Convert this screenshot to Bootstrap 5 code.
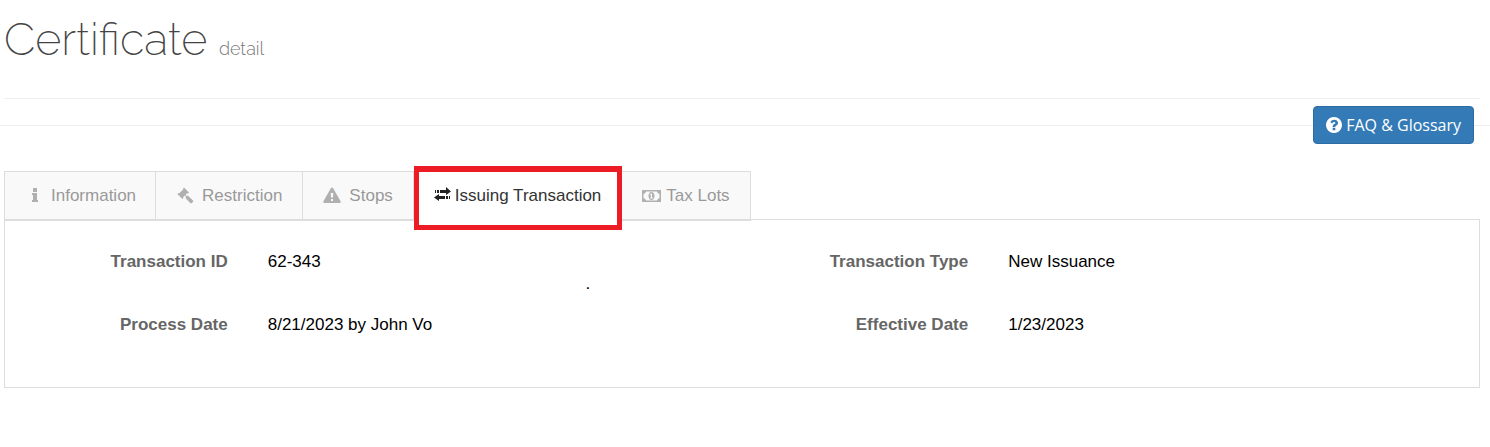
<!DOCTYPE html>
<html lang="en">
<head>
<meta charset="utf-8">
<meta name="viewport" content="width=device-width, initial-scale=1">
<title>Certificate detail</title>
<link href="https://cdn.jsdelivr.net/npm/bootstrap@5.3.0/dist/css/bootstrap.min.css" rel="stylesheet">
<style>
body{font-family:"Liberation Sans",Arial,sans-serif;font-size:17px;line-height:24px;color:#000;background:#fff}
svg{fill:currentColor}
.page-title{font-family:Raleway,Lato,sans-serif;font-weight:200;font-size:45px;line-height:56px;color:#444;padding:12px 0 30px;border-bottom:1px solid #eee;margin:0 10px 0 4px}
.page-title small{font-size:18px;font-weight:300;line-height:1;color:#777}
.help-bar{margin-top:7px;padding-right:16px;background:linear-gradient(#eee,#eee) 0 19px/100% 1px no-repeat}
.btn-help{--bs-btn-color:#fff;--bs-btn-bg:#337ab7;--bs-btn-border-color:#2e6da4;--bs-btn-hover-color:#fff;--bs-btn-hover-bg:#286090;--bs-btn-border-radius:4px;--bs-btn-padding-x:12px;--bs-btn-padding-y:6px;font-family:"Open Sans",sans-serif;font-size:16px;line-height:24px}
.tabs-area{margin:27px 10px 0 4px}
.cert-tabs{--bs-nav-tabs-border-width:0;position:relative;z-index:1}
.cert-tabs .nav-link{height:50px;border:1px solid #ddd;border-left-width:0;border-bottom-width:2px;border-radius:0;margin:0;padding:0 20px;background:#f9f9f9;color:#999;line-height:24px}
.cert-tabs .nav-item:first-child .nav-link{border-left-width:1px;padding-right:19px}
.cert-tabs .nav-link svg{color:#b0b0b0}
.cert-tabs .nav-link.active{position:relative;background:#fff;color:#333}
.cert-tabs .nav-link.active svg{color:#222}
.cert-tabs .nav-link.active::after{content:"";position:absolute;inset:-6px -1px -11px 0;border:5px solid #ed1c24;border-top-width:6px}
.detail-panel{border:1px solid #ddd;margin-top:-2px;padding:30px 0 50px 1px}
.detail-panel dt{width:33%;padding-right:20px;text-align:right;color:#666}
.detail-panel dd{padding-left:20px;margin:0}
.stray-line{width:79%;height:39px;line-height:20px}
</style>
</head>
<body>
<h1 class="page-title">Certificate <small>detail</small></h1>
<div class="help-bar d-flex justify-content-end">
  <button type="button" class="btn btn-help d-flex align-items-center gap-1"><svg width="16" height="16" viewBox="128 128 1536 1536" aria-hidden="true"><path d="M1024 1376v-192q0-14-9-23t-23-9H800q-14 0-23 9t-9 23v192q0 14 9 23t23 9h192q14 0 23-9t9-23zm256-672q0-88-55.500-163T1086 425t-170-41q-243 0-371 213-15 24 8 42l132 100q7 6 19 6 16 0 25-12 53-68 86-92 34-24 86-24 48 0 85.500 26t37.500 59q0 38-20 61t-68 45q-63 28-115.500 86.500T768 1020v36q0 14 9 23t23 9h192q14 0 23-9t9-23q0-19 21.500-49.500T1100 957q32-18 49-28.500t46-35 44.500-48 28-60.500T1280 704zm384 192q0 209-103 385.500T1281.500 1561 896 1664t-385.500-103T231 1281.500 128 896t103-385.500T510.500 231 896 128t385.500 103T1561 510.500 1664 896z"/></svg>FAQ &amp; Glossary</button>
</div>
<main class="tabs-area">
  <ul class="nav nav-tabs cert-tabs" role="tablist">
    <li class="nav-item"><button type="button" role="tab" class="nav-link d-flex align-items-center gap-2"><svg width="18" height="18" viewBox="0 0 18 18" aria-hidden="true"><path d="M8 1h4v4H8zM7 6h5v7h1v2H7v-2h1V8H7z"/></svg>Information</button></li>
    <li class="nav-item"><button type="button" role="tab" class="nav-link d-flex align-items-center gap-2"><svg width="18" height="18" viewBox="0 0 18 18" aria-hidden="true"><path d="M8 .5l5 5-1 1-.8-.3-1.700 1.700 1.300 1.300 1-.7 5 4.800c.6.600.6 1.200 0 1.800l-.8.800c-.6.600-1.200.6-1.800 0l-4.800-5 .7-1-1.300-1.300-1.700 1.600.3.800-1 1-5-5 1-1 .9.200 4-4-.2-.7z"/></svg>Restriction</button></li>
    <li class="nav-item"><button type="button" role="tab" class="nav-link d-flex align-items-center gap-2"><svg width="18" height="18" viewBox="0 0 18 18" aria-hidden="true"><path fill-rule="evenodd" d="M8 1.100q1-1.200 2 0l7.600 13.100q.6 1.500-1 1.800H1.400q-1.600-.3-1-1.800zM7.700 6l.3 4.500h2l.3-4.500zM8 12v2h2v-2z"/></svg>Stops</button></li>
    <li class="nav-item"><button type="button" role="tab" aria-selected="true" class="nav-link active d-flex align-items-center gap-1"><svg width="17" height="18" viewBox="0 0 17 18" aria-hidden="true"><path d="M1 3h1v3H1zM3 3h2v3H3zM6 3h6V0l5 4.500L12 8V6H6zM16 9h-1v3h1zM14 9h-2v3h2zM11 9H5V7L0 10.500 5 14v-2h6z"/></svg>Issuing Transaction</button></li>
    <li class="nav-item"><button type="button" role="tab" class="nav-link d-flex align-items-center gap-1"><svg width="20" height="18" viewBox="0 0 20 18" aria-hidden="true"><path fill-rule="evenodd" d="M0 3h19v12H0zM4 4.500Q3.500 6.500 1.500 7v4q2 .5 2.500 2.500h11q.5-2 2.500-2.500V7q-2-.5-2.500-2.500zM9.500 5c4 0 4 8 0 8s-4-8 0-8zM9 6.500L7.800 7.700l.6.600.6-.3v2.500H8v1h3v-1h-1v-4z"/></svg>Tax Lots</button></li>
  </ul>
  <section class="detail-panel">
    <dl class="row gx-2 mb-0 mx-n1">
      <div class="col-6 d-flex"><dt>Transaction ID</dt><dd>62-343</dd></div>
      <div class="col-6 d-flex"><dt>Transaction Type</dt><dd>New Issuance</dd></div>
    </dl>
    <div class="stray-line text-center">.</div>
    <dl class="row gx-2 mb-0 mx-n1">
      <div class="col-6 d-flex"><dt>Process Date</dt><dd>8/21/2023 by John Vo</dd></div>
      <div class="col-6 d-flex"><dt>Effective Date</dt><dd>1/23/2023</dd></div>
    </dl>
  </section>
</main>
<script src="https://cdn.jsdelivr.net/npm/bootstrap@5.3.0/dist/js/bootstrap.bundle.min.js"></script>
</body>
</html>
